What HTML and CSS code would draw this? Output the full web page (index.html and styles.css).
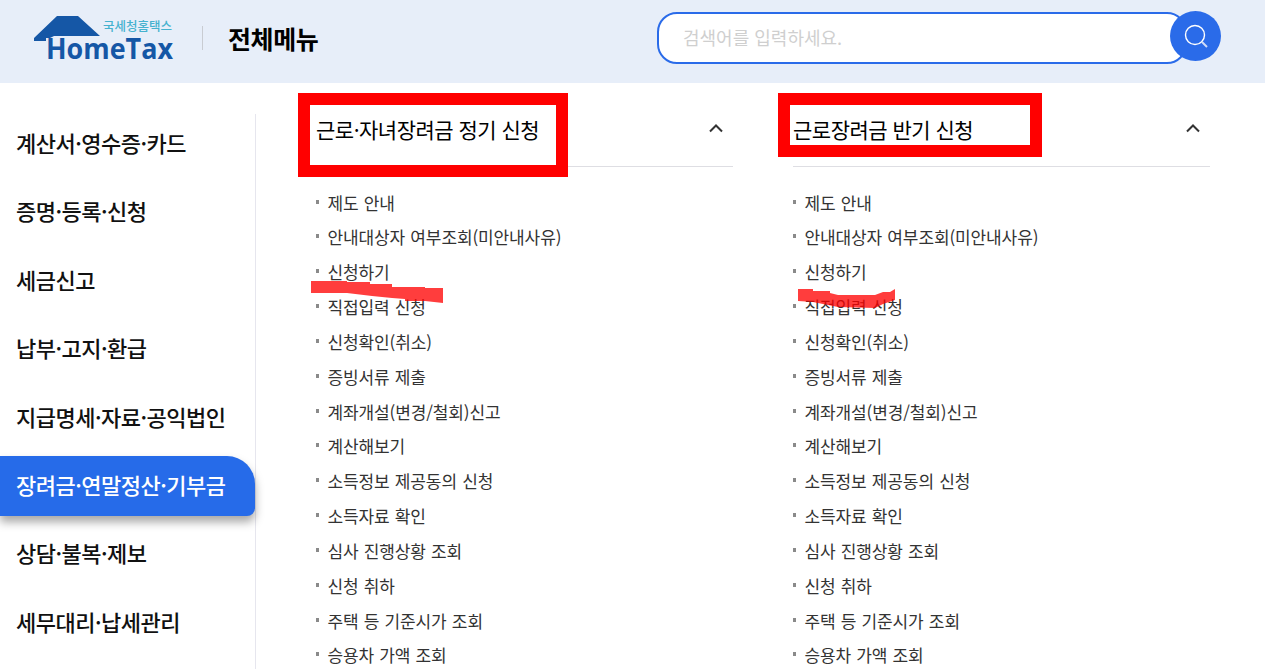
FILE: index.html
```html
<!DOCTYPE html>
<html lang="ko">
<head>
<meta charset="utf-8">
<title>전체메뉴</title>
<link rel="stylesheet" href="styles.css">
</head>
<body>
<div class="page">
  <header class="header">
    <svg class="logo" width="180" height="70" viewBox="0 0 180 70" aria-label="HomeTax">
      <polygon class="logo-blue" points="34,38 57,16 78,16 100,36 54,36 50,38 46,38 46,41 34,41"/>
      <text class="logo-sub" x="103" y="31">국세청홈택스</text>
      <text class="logo-name" x="46" y="58.5" textLength="127" lengthAdjust="spacingAndGlyphs">HomeTax</text>
    </svg>
    <span class="divider"></span>
    <h1 class="title">전체메뉴</h1>
    <div class="search">
      <div class="search-input">검색어를 입력하세요.</div>
      <button class="search-btn" type="button" aria-label="검색">
        <svg width="26" height="26" viewBox="0 0 26 26" fill="none" stroke="#fff">
          <circle cx="12" cy="12" r="9.5" stroke-width="1.4"/>
          <path d="M19 19 L24 24" stroke-width="2" stroke="#cfdcf8"/>
        </svg>
      </button>
    </div>
  </header>
  <div class="body">
    <nav class="side">
      <a class="side-item">계산서·영수증·카드</a>
      <a class="side-item">증명·등록·신청</a>
      <a class="side-item">세금신고</a>
      <a class="side-item">납부·고지·환급</a>
      <a class="side-item">지급명세·자료·공익법인</a>
      <a class="side-item active">장려금·연말정산·기부금</a>
      <a class="side-item">상담·불복·제보</a>
      <a class="side-item">세무대리·납세관리</a>
    </nav>
    <main class="cols">
      <section class="col">
        <div class="col-head">
          <h2>근로·자녀장려금 정기 신청</h2>
          <svg class="chev" width="16" height="10" viewBox="0 0 16 10" fill="none"><path d="M2 8.5 L8 2.5 L14 8.5"/></svg>
        </div>
        <ul class="list">
          <li>제도 안내</li>
          <li>안내대상자 여부조회(미안내사유)</li>
          <li>신청하기</li>
          <li>직접입력 신청</li>
          <li>신청확인(취소)</li>
          <li>증빙서류 제출</li>
          <li>계좌개설(변경/철회)신고</li>
          <li>계산해보기</li>
          <li>소득정보 제공동의 신청</li>
          <li>소득자료 확인</li>
          <li>심사 진행상황 조회</li>
          <li>신청 취하</li>
          <li>주택 등 기준시가 조회</li>
          <li>승용차 가액 조회</li>
        </ul>
      </section>
      <section class="col">
        <div class="col-head">
          <h2>근로장려금 반기 신청</h2>
          <svg class="chev" width="16" height="10" viewBox="0 0 16 10" fill="none"><path d="M2 8.5 L8 2.5 L14 8.5"/></svg>
        </div>
        <ul class="list">
          <li>제도 안내</li>
          <li>안내대상자 여부조회(미안내사유)</li>
          <li>신청하기</li>
          <li>직접입력 신청</li>
          <li>신청확인(취소)</li>
          <li>증빙서류 제출</li>
          <li>계좌개설(변경/철회)신고</li>
          <li>계산해보기</li>
          <li>소득정보 제공동의 신청</li>
          <li>소득자료 확인</li>
          <li>심사 진행상황 조회</li>
          <li>신청 취하</li>
          <li>주택 등 기준시가 조회</li>
          <li>승용차 가액 조회</li>
        </ul>
      </section>
    </main>
  </div>
  <svg class="marks" width="1265" height="669" viewBox="0 0 1265 669" fill="none">
    <rect class="box" x="304" y="99" width="258" height="72"/>
    <rect class="box" x="784" y="99" width="252" height="52"/>
    <polygon class="scribble" points="311,281 347,281 347,282 370,282 370,284 392,284 392,287 425,287 425,288 443,288 443,303 425,301 405,301 405,299 392,298 372,296 347,293 311,293"/>
    <polygon class="scribble" points="798,289 813,289 813,291 830,291 830,293 838,295 875,295 883,292 890,292 895,289 895,300 883,304 875,308 838,307 813,302 798,301"/>
  </svg>
</div>
</body>
</html>
```
FILE: styles.css
```css
* { box-sizing: border-box; }
html, body { margin: 0; padding: 0; }
body {
  font-family: "Noto Sans CJK KR", "Noto Sans", sans-serif;
  background: #fff;
  color: #111;
}
.page { position: relative; width: 1265px; height: 669px; overflow: hidden; }

.header {
  height: 83px;
  padding-bottom: 7px;
  background: #e7eef9;
  display: flex;
  align-items: center;
  position: relative;
}
.logo { flex: none; margin-right: 22px; display: block; align-self: flex-start; }
.logo-blue { fill: #1557a6; }
.logo-sub { font-size: 12.5px; font-weight: 500; fill: #45b2cf; font-family: "Noto Sans CJK KR", sans-serif; }
.logo-name { font-size: 28px; font-weight: 700; fill: #1557a6; font-family: "Open Sans", sans-serif; }
.divider { width: 1px; height: 24px; background: #c9ccd2; margin-right: 25px; }
.title { margin: 0; font-size: 25px; font-weight: 700; color: #000; line-height: 32px; letter-spacing: -.4px; }
.search { margin-left: auto; margin-right: 44px; display: flex; align-items: center; }
.search-input {
  width: 530px;
  height: 52px;
  border: 2px solid #2a6be9;
  border-radius: 20px;
  background: #fff;
  color: #cfcfcf;
  font-size: 18px;
  line-height: 46px;
  padding-left: 24px;
}
.search-btn {
  width: 51px;
  height: 50px;
  margin-left: -17px;
  margin-top: -4px;
  border: 0;
  border-radius: 50%;
  background: #2a6be9;
  padding: 0;
  display: flex;
  align-items: center;
  justify-content: center;
  position: relative;
}

.body { display: flex; }
.side {
  width: 256px;
  margin-top: 31px;
  height: 600px;
  border-right: 1px solid #e6e6ee;
  display: flex;
  flex-direction: column;
  gap: 8.4px;
  flex: none;
}
.side-item {
  height: 60px;
  flex: none;
  display: flex;
  align-items: center;
  padding-left: 16px;
  padding-bottom: 4px;
  font-size: 22px;
  font-weight: 500;
  color: #111;
  letter-spacing: -.5px;
}
.side-item.active {
  background: #266be9;
  color: #fff;
  border-radius: 0 28px 8px 0;
  box-shadow: 0 6px 10px rgba(0, 0, 0, .35);
}

.cols { display: flex; gap: 60px; padding-left: 60px; }
.col { width: 417px; flex: none; }
.col-head {
  height: 84px;
  padding-top: 24px;
  border-bottom: 1px solid #dedee3;
  display: flex;
  justify-content: space-between;
  align-items: flex-start;
}
.col-head h2 { margin: 0; font-size: 21px; font-weight: 400; color: #000; line-height: 44px; letter-spacing: -.5px; }
.chev { margin: 16px 9px 0 0; }
.chev path { stroke: #333; stroke-width: 2; }
.list { list-style: none; margin: 18.5px 0 0; padding: 0; }
.list li {
  height: 34.85px;
  line-height: 34.85px;
  font-size: 17px;
  letter-spacing: -.12px;
  word-spacing: .6px;
  color: #333;
  padding-left: 11.5px;
  position: relative;
}
.list li::before {
  content: "";
  position: absolute;
  left: 0;
  top: 14px;
  width: 3px;
  height: 4px;
  background: #8a8a8a;
}
.marks { position: absolute; left: 0; top: 0; pointer-events: none; }
.box { stroke: #f00; stroke-width: 12; }
.scribble { fill: #f00; fill-opacity: .76; }
```
